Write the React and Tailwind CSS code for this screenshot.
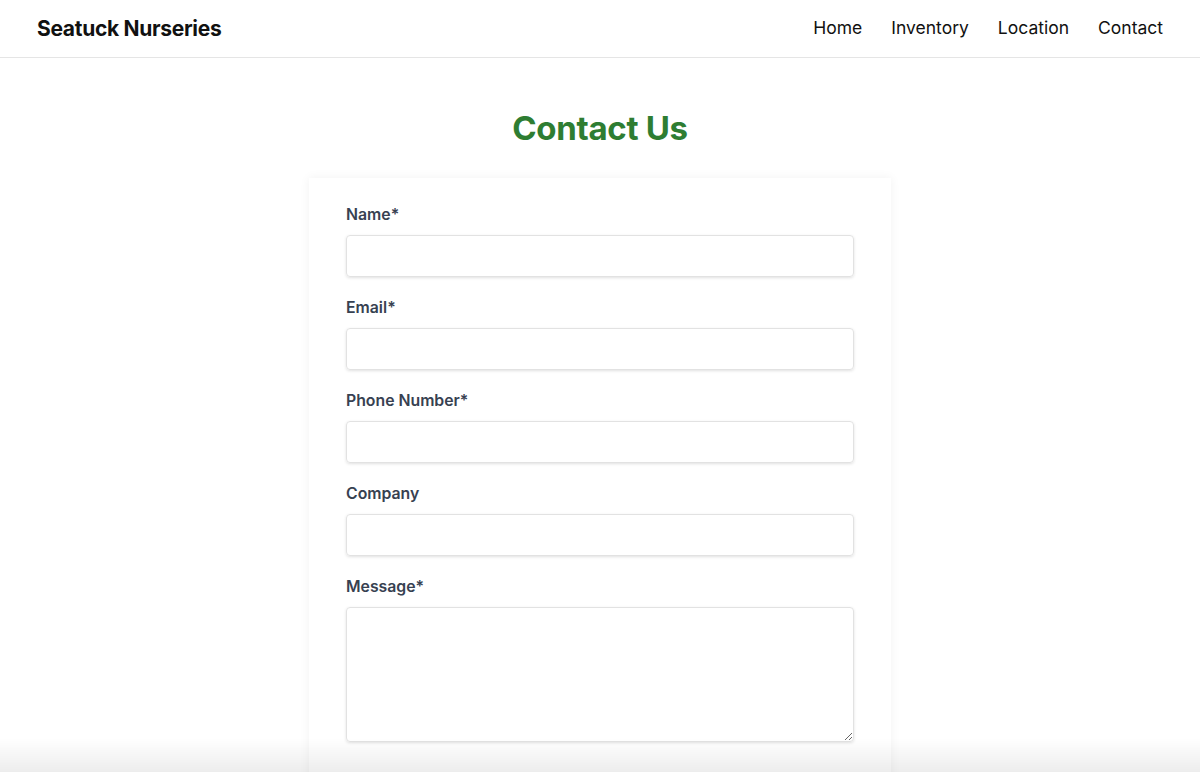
import React from 'react';

const fields = [
  { id: 'name', label: 'Name*' },
  { id: 'email', label: 'Email*' },
  { id: 'phone', label: 'Phone Number*' },
  { id: 'company', label: 'Company' },
];

const navLinks = ['Home', 'Inventory', 'Location', 'Contact'];

const App = () => {
  return (
    <div className="min-h-screen bg-white font-['Inter',sans-serif] text-[#111]">
      <header className="h-[58px] px-[37px] flex items-center justify-between border-b border-[#e5e5e5]">
        <span className="text-[21px] font-bold tracking-[-0.3px] text-[#111]">Seatuck Nurseries</span>
        <nav className="flex items-center gap-[29px] text-[17.5px] text-[#111]">
          {navLinks.map(link => (
            <a key={link} href="#" className="no-underline">{link}</a>
          ))}
        </nav>
      </header>

      <main className="flex flex-col items-center">
        <h1 className="mt-[50px] text-[33px] leading-[40px] font-bold text-[#2e7d32] tracking-[-0.3px]">Contact Us</h1>

        <form className="mt-[30px] w-[582px] px-[37px] pt-[27px] pb-[40px] bg-white shadow-[0_0_10px_rgba(0,0,0,0.06)]">
          {fields.map(field => (
            <div key={field.id} className="mb-[21px]">
              <label htmlFor={field.id} className="block text-[15.8px] leading-[20px] font-semibold text-[#374151] mb-[10px]">
                {field.label}
              </label>
              <input
                id={field.id}
                type="text"
                className="block w-full h-[42px] rounded-[4px] border border-[#e2e2e2] shadow-[0_1px_3px_rgba(0,0,0,0.12)] px-3 outline-none"
              />
            </div>
          ))}
          <div>
            <label htmlFor="message" className="block text-[15.8px] leading-[20px] font-semibold text-[#374151] mb-[10px]">
              Message*
            </label>
            <textarea
              id="message"
              className="block w-full h-[135px] rounded-[4px] border border-[#e2e2e2] shadow-[0_1px_3px_rgba(0,0,0,0.12)] px-3 py-2 outline-none"
            />
          </div>
        </form>
      </main>

      {/* soft fade at the bottom edge */}
      <div className="fixed left-0 right-0 bottom-0 h-[34px] pointer-events-none bg-gradient-to-b from-transparent to-[rgba(0,0,0,0.07)]" />
    </div>
  );
};

export default App;
